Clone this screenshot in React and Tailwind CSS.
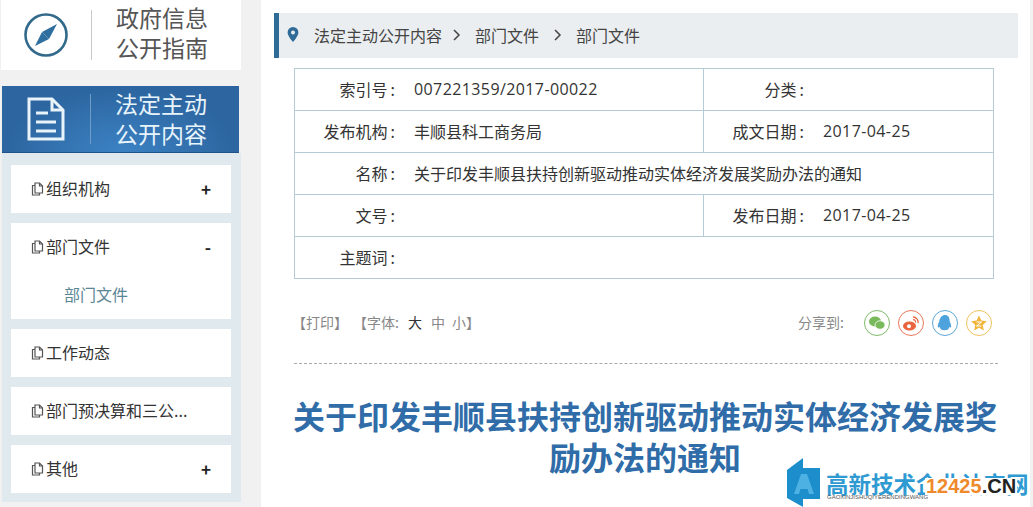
const cjk = "font-['Noto_Sans_CJK_SC','Noto_Sans',sans-serif]";

const menu = [
  { name: "组织机构", mark: "+" },
  { name: "部门文件", mark: "-", sub: "部门文件" },
  { name: "工作动态" },
  { name: "部门预决算和三公..." },
  { name: "其他", mark: "+" },
];

function PageIcon() {
  return (
    <svg width="13" height="14" viewBox="0 0 13 14" fill="none" stroke="#555" strokeWidth="1.2" className="shrink-0">
      <path d="M4 1h4.5L11.5 4v7H4z" />
      <path d="M8.5 1v3h3" />
      <path d="M4 3.5H1.5V13H8.5v-2" />
    </svg>
  );
}

function MenuItem({ item }) {
  return (
    <div className="bg-white">
      <div className="h-12 flex items-center pl-[20px] pr-[20px]">
        <PageIcon />
        <span className="ml-[2px] pb-[2px] text-[16px] text-[#333] flex-1">{item.name}</span>
        {item.mark && <span className="text-[17px] font-bold text-[#222]">{item.mark}</span>}
      </div>
      {item.sub && <div className="h-12 pl-[53px] text-[16px] leading-[46px] text-[#5b8696]">{item.sub}</div>}
    </div>
  );
}

function Cell({ label, value, wide, right, num }) {
  return (
    <div className={`flex items-center h-[41px] ${wide ? "col-span-2" : ""} ${right ? "border-l border-[#b5cbd8]" : ""}`}>
      <span className={`${right ? "w-[100px]" : "w-[100px]"} pb-[2px] text-right text-[#333] shrink-0`}>
        {label}
        <span className="ml-[3px]">:</span>
      </span>
      <span className={`${right ? "ml-[19px]" : "ml-[19px]"} pb-[2px] text-[#333] ${num ? "font-['Open_Sans',sans-serif] tracking-[0.4px]" : ""}`}>{value}</span>
    </div>
  );
}

function Row({ children, last }) {
  return <div className={`grid grid-cols-[408px_1fr] ${last ? "" : "border-b border-[#b5cbd8]"}`}>{children}</div>;
}

function ShareIcon({ ring, children }) {
  return (
    <span className={`w-[26px] h-[26px] rounded-full border flex items-center justify-center ${ring}`}>
      <svg width="20" height="20" viewBox="0 0 20 20">{children}</svg>
    </span>
  );
}

export default function App() {
  return (
    <div className={`w-[1033px] h-[507px] overflow-hidden flex bg-[#f1f1f1] relative ${cjk}`}>
      <aside className="w-[241px] ml-[1px] shrink-0 flex flex-col">
        <div className="h-[70px] w-[240px] bg-white flex items-center">
          <svg width="46" height="46" viewBox="0 0 46 46" className="ml-[22px] shrink-0">
            <circle cx="23" cy="23" r="20.5" fill="none" stroke="#336a8c" strokeWidth="2.6" />
            <path d="M34 12 L26 27 L19 20 Z" fill="#2f6f9f" />
            <path d="M12 34 L19 20 L26 27 Z" fill="#2f6f9f" />
          </svg>
          <div className="w-px h-[50px] bg-[#c9c9c9] ml-[22px]" />
          <div className="ml-[24px] pb-[6px] text-[23px] leading-[30px] text-[#555]">政府信息<br />公开指南</div>
        </div>
        <div className="mt-[16px] ml-[1px] w-[237px] h-[67px] flex items-center bg-[radial-gradient(ellipse_at_50%_100%,#3c82c4,#2c659f_70%)] border-b border-[#1f5288]">
          <svg width="38" height="44" viewBox="0 0 38 44" fill="none" stroke="#e9f3fa" strokeWidth="3" className="ml-[25px] shrink-0">
            <path d="M2 2h23l11 11v29H2z" />
            <path d="M25 2v11h11" />
            <path d="M9 16h12M9 25h20M9 34h20" />
          </svg>
          <div className="w-px h-[50px] bg-[#6d9cc8] ml-[25px]" />
          <div className="ml-[24px] pb-[2px] text-[23px] leading-[30px] text-[#e8f4fb]">法定主动<br />公开内容</div>
        </div>
        <div className="ml-[1px] w-[239px] h-[349px] bg-[#e0e9ee] pt-[12px] pl-[9px] pr-[10px] flex flex-col gap-[10px]">
          {menu.map((item) => (
            <MenuItem key={item.name} item={item} />
          ))}
        </div>
      </aside>

      <main className="ml-[19px] w-[769px] bg-white pt-[13px] pl-[13px] shrink-0">
        <div className="w-[744px] h-[45px] pb-[2px] bg-[#ebeef1] border-l-[5px] border-[#2f6b97] flex items-center text-[16px] text-[#444]">
          <svg width="12" height="15" viewBox="0 0 12 15" className="ml-[8px] shrink-0">
            <path fillRule="evenodd" d="M6 0a5.4 5.4 0 0 1 5.4 5.4C11.4 9 6 15 6 15S.6 9 .6 5.4A5.4 5.4 0 0 1 6 0zm0 3.4a2 2 0 1 0 0 4 2 2 0 0 0 0-4z" fill="#2f6b97" />
          </svg>
          <span className="ml-[15px]">法定主动公开内容</span>
          <svg width="8" height="12" viewBox="0 0 8 12" fill="none" stroke="#444" strokeWidth="1.5" className="ml-[11px]"><path d="M1 1l5 5-5 5" /></svg>
          <span className="ml-[14px]">部门文件</span>
          <svg width="8" height="12" viewBox="0 0 8 12" fill="none" stroke="#444" strokeWidth="1.5" className="ml-[15px]"><path d="M1 1l5 5-5 5" /></svg>
          <span className="ml-[14px]">部门文件</span>
        </div>

        <div className="ml-[20px] mt-[10px] w-[700px] h-[211px] border border-[#b5cbd8] text-[16px]">
          <Row>
            <Cell num label="索引号" value="007221359/2017-00022" />
            <Cell right label="分类" value="" />
          </Row>
          <Row>
            <Cell label="发布机构" value="丰顺县科工商务局" />
            <Cell num right label="成文日期" value="2017-04-25" />
          </Row>
          <Row>
            <Cell wide label="名称" value="关于印发丰顺县扶持创新驱动推动实体经济发展奖励办法的通知" />
          </Row>
          <Row>
            <Cell label="文号" value="" />
            <Cell num right label="发布日期" value="2017-04-25" />
          </Row>
          <Row last>
            <Cell wide label="主题词" value="" />
          </Row>
        </div>

        <div className="ml-[20px] mt-[29px] w-[704px] h-[56px] flex items-start border-b border-dashed border-[#aaa] text-[14px] text-[#888]">
          <div className="flex items-center h-[28px] -ml-[2px]">
            <span>【打印】</span>
            <span className="ml-[5px]">【字体:</span>
            <span className="ml-[9px] text-[#333]">大</span>
            <span className="ml-[9px]">中</span>
            <span className="ml-[7px]">小】</span>
          </div>
          <div className="ml-auto mr-[6px] flex items-center h-[30px]">
            <span className="mr-[20px] pb-[2px]">分享到:</span>
            <div className="flex gap-[8px]">
              <ShareIcon ring="border-[#7fbb6a]">
                <ellipse cx="8" cy="8.5" rx="6" ry="5" fill="#78b95c" />
                <ellipse cx="13" cy="12" rx="5" ry="4.2" fill="#78b95c" stroke="#fff" strokeWidth="0.8" />
              </ShareIcon>
              <ShareIcon ring="border-[#e8785a]">
                <ellipse cx="8.5" cy="13" rx="6.5" ry="4.6" fill="#e8653f" />
                <circle cx="8" cy="13.2" r="2" fill="#fff" />
                <path d="M12 4a5 5 0 0 1 5 6" fill="none" stroke="#e8653f" strokeWidth="1.3" />
                <path d="M12 6.6a2.4 2.4 0 0 1 2.5 3" fill="none" stroke="#e8653f" strokeWidth="1.1" />
              </ShareIcon>
              <ShareIcon ring="border-[#5da7d8]">
                <path d="M10 2c3 0 4.6 2.4 4.6 5.4 0 1.4 1.6 3.4 1.6 6 0 1.6-1 1.4-1.8.4-.2 1.4-1 2.4-1.8 3-1.6.6-4.6.6-6 0-.9-.6-1.7-1.6-1.9-3-.8 1-1.9 1.2-1.9-.4 0-2.6 1.6-4.6 1.6-6C5.4 4.4 7 2 10 2z" fill="#4fa3dd" />
              </ShareIcon>
              <ShareIcon ring="border-[#efc25e]">
                <path d="M10 2.5l2.4 5 5.4.7-4 3.8 1 5.4-4.8-2.6-4.8 2.6 1-5.4-4-3.8 5.4-.7z" fill="#f0b53c" />
                <path d="M7.5 9h5l-5 4h5" fill="none" stroke="#fff" strokeWidth="1" />
              </ShareIcon>
            </div>
          </div>
        </div>

        <h1 className="ml-[19px] mt-[31px] w-[704px] text-center text-[32px] leading-[41px] font-bold text-[#2f6ca8]">
          关于印发丰顺县扶持创新驱动推动实体经济发展奖励办法的通知
        </h1>
      </main>

      {/* site watermark, sits on top of the page */}
      <div className="absolute left-[786px] top-[457px] w-[247px] h-[50px]">
        <svg width="35" height="50" viewBox="0 0 35 50" className="absolute left-0 top-0">
          <path d="M1 13 L17 1 V11 H34 V42 H17 V50 L1 41 Z" fill="#1b8ecb" />
          <path d="M8 37 L15 17 H21 L28 37 H23 L21.5 32 H14.5 L13 37 Z" fill="#4db1e3" />
        </svg>
        <div className="absolute left-[40px] top-[11px] text-[22.5px] leading-[30px] font-bold text-[#2f9ad2] whitespace-nowrap">高新技术企业认定网</div>
        <div className="absolute left-[41px] top-[36px] text-[6px] leading-[9px] text-[#555] whitespace-nowrap font-['Liberation_Sans',sans-serif]">GAOXINJISHUQIYERENDINGWANG</div>
        <div className="absolute left-[139px] top-[21px] h-[17px] px-px bg-white text-[20px] leading-[17px] font-bold whitespace-nowrap font-['Liberation_Sans',sans-serif]">
          <span className="text-[#ef8a2c]">12425</span><span className="text-[#222]">.CN</span>
        </div>
      </div>
    </div>
  );
}
